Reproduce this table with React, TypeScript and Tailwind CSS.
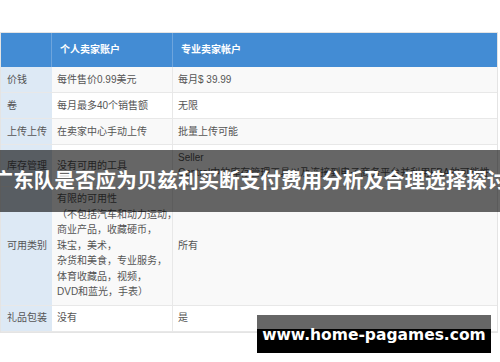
const rows = [
  { label: "价钱", personal: ["每件售价0.99美元"], pro: ["每月$ 39.99"] },
  { label: "卷", personal: ["每月最多40个销售额"], pro: ["无限"] },
  { label: "上传上传", personal: ["在卖家中心手动上传"], pro: ["批量上传可能"] },
  {
    label: "库存管理",
    personal: ["没有可用的工具"],
    pro: ["Seller", "Central中的库存管理工具以及连接到电子商务平台并利用FBA的可能性"],
  },
  {
    label: "可用类别",
    personal: [
      "有限的可用性",
      "（不包括汽车和动力运动，",
      "商业产品，收藏硬币，",
      "珠宝，美术，",
      "杂货和美食，专业服务，",
      "体育收藏品，视频，",
      "DVD和蓝光，手表）",
    ],
    pro: ["所有"],
  },
  { label: "礼品包装", personal: ["没有"], pro: ["是"] },
];

const font = { fontFamily: '"Liberation Sans", "Noto Sans CJK SC", sans-serif' };

const App = () => {
  return (
    <div
      className="relative w-[500px] h-[362px] overflow-hidden bg-white pt-[32px]"
      style={font}>
      <div className="w-[498px] border border-[#e4e4e4] text-[10px] leading-[15.5px] text-[#555]">
        <div className="grid grid-cols-[51px_121px_1fr] h-[34px] bg-[#438cd4] text-white font-bold">
          <div className="border-r border-[#6ea5dd]" />
          <div className="flex items-center px-[8px] border-r border-[#6ea5dd]">个人卖家账户</div>
          <div className="flex items-center px-[8px]">专业卖家帐户</div>
        </div>
        {rows.map((row, index) => (
          <div
            className={`grid grid-cols-[51px_121px_1fr] border-b border-[#e8e8e8] ${
              index % 2 === 0 ? "bg-[#f9f9f9]" : "bg-white"
            }`}
            key={index}>
            <div className="flex items-center px-[6px] bg-[#dde9f5] whitespace-nowrap">
              {row.label}
            </div>
            <div className="flex flex-col justify-center px-[5px] py-[4.75px] border-r border-[#e8e8e8]">
              {row.personal.map((line, i) => (
                <div className="whitespace-nowrap" key={i}>
                  {line}
                </div>
              ))}
            </div>
            <div className="flex flex-col justify-center px-[5px] py-[4.75px]">
              {row.pro.map((line, i) => (
                <div className="whitespace-nowrap" key={i}>
                  {line}
                </div>
              ))}
            </div>
          </div>
        ))}
      </div>

      <div className="absolute left-0 top-[150px] w-[500px] h-[62px] bg-black/60 flex items-center justify-center overflow-hidden">
        <span className="whitespace-nowrap text-white font-bold text-[20.6px] leading-none">
          广东队是否应为贝兹利买断支付费用分析及合理选择探讨
        </span>
      </div>

      <div className="absolute left-[257px] top-[315px] w-[234px] h-[38px] bg-[linear-gradient(to_bottom,#666_0,#666_14px,#000_14px,#000_100%)] flex items-center justify-center">
        <span
          className="whitespace-nowrap text-white font-bold text-[15.5px] leading-none pt-[4px]"
          style={{ fontFamily: '"DejaVu Sans", sans-serif' }}>
          www.home-pagames.com
        </span>
      </div>
    </div>
  );
};

export default App;
